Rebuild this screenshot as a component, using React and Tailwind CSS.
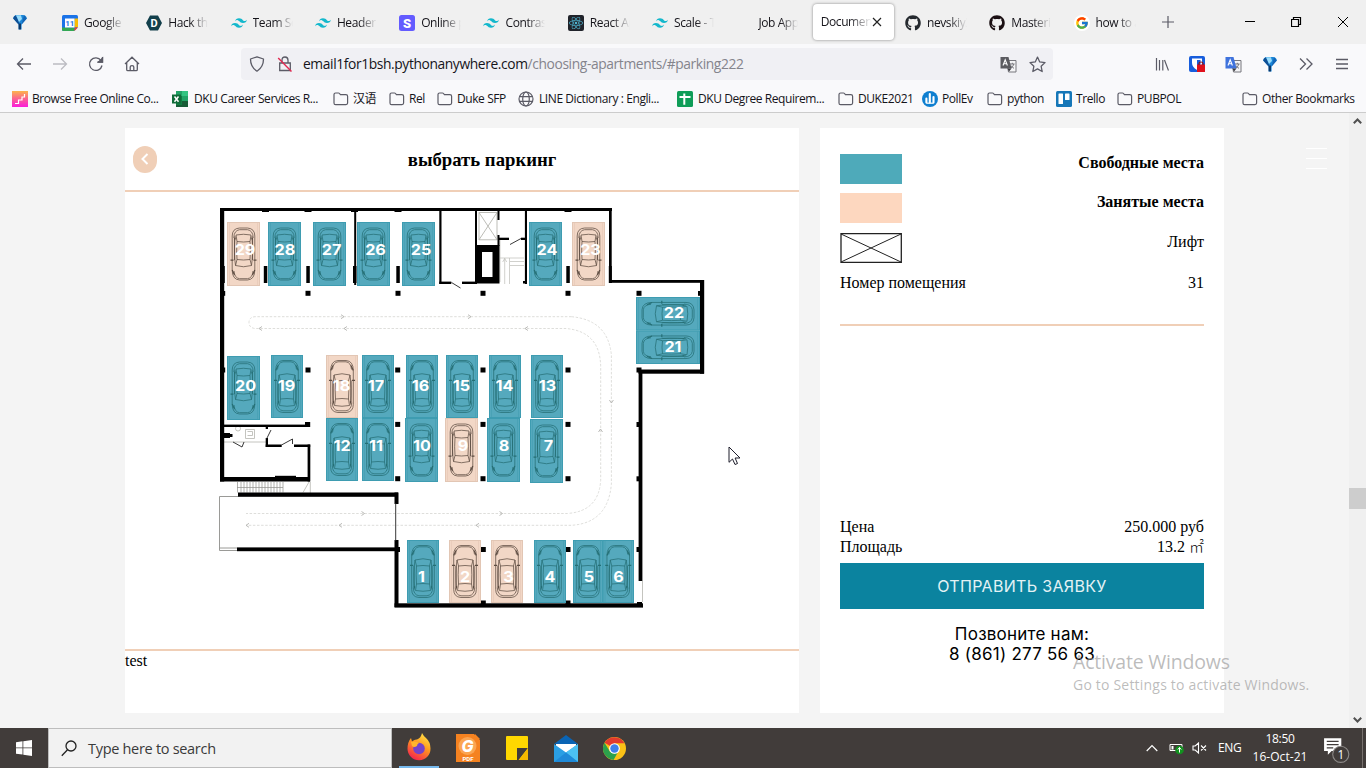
import React from "react";
import { FaGithub, FaReact } from "react-icons/fa";
import { SiTailwindcss } from "react-icons/si";
import { FcGoogle } from "react-icons/fc";

const FREE = "#55a9bd";
const TAKEN = "#f2d7c6";

/* ---------- small icons ---------- */

const Gem = () => (
  <svg width="16" height="16" viewBox="0 0 16 16">
    <path d="M1.200 4.600Q1.500 1.200 5 1h6q3.500.2 3.800 3.600L9.600 10.500V15.400H6.600V10.500z" fill="#1b86d8" />
    <path d="M1.200 4.600Q1.500 2 4 1.300L7 8.500 6.600 10.500z" fill="#0f4f94" />
    <path d="M4 1.200h5L10 5 7 8z" fill="#9addfb" />
    <path d="M12 1.200l2.800 3.400L9.600 10.500z" fill="#1565b5" />
    <path d="M6.600 9.500h2.400v5.900H6.600z" fill="#0b3768" />
  </svg>
);

const Calendar = () => (
  <svg width="16" height="16" viewBox="0 0 16 16">
    <path d="M0 1.500Q0 0 1.500 0h13Q16 0 16 1.500V12l-4 4H1.500Q0 16 0 14.500z" fill="#1a73e8" />
    <path d="M12.500 3.500H16V12l-3.500.5z" fill="#fbbc04" />
    <path d="M0 12.500h12.500V16h-11Q0 16 0 14.500z" fill="#34a853" />
    <path d="M12.500 12.500H16L12.500 16z" fill="#ea4335" />
    <path d="M3 3.500h9.500v9H3z" fill="#fff" />
    <text x="7.800" y="11" fontSize="8" fontWeight="700" fontFamily="Roboto, sans-serif" textAnchor="middle" fill="#1a73e8">11</text>
  </svg>
);

const HexD = () => (
  <svg width="16" height="16" viewBox="0 0 16 16">
    <path d="M4 .5h8L16 8l-4 7.500H4L0 8z" fill="#123f4b" />
    <text x="8.200" y="12" fontSize="11" fontWeight="700" fontFamily="Roboto, sans-serif" textAnchor="middle" fill="#fff">D</text>
  </svg>
);

const StackS = () => (
  <svg width="16" height="16" viewBox="0 0 16 16">
    <rect width="16" height="16" rx="2.500" fill="#635bff" />
    <text x="8" y="12.700" fontSize="13" fontWeight="900" fontFamily="Roboto, sans-serif" textAnchor="middle" fill="#fff">S</text>
  </svg>
);

const Wave = () => <SiTailwindcss size={16} color="#14b8cc" />;

const ReactTile = () => (
  <span className="flex size-4 items-center justify-center rounded-xs bg-[#20232a]">
    <FaReact size={14} color="#4fb3cf" />
  </span>
);

const GoogleRound = () => (
  <span className="flex size-4 items-center justify-center rounded-full bg-white">
    <FcGoogle size={14} />
  </span>
);

const Folder = () => (
  <svg width="16" height="16" viewBox="0 0 16 16" fill="none" stroke="#5b5b66" strokeWidth="1.200">
    <path d="M1 3.600Q1 2 2.600 2h2.900q.6 0 1 .5L7.400 3.600h5.500q1.700 0 1.700 1.600v6.900q0 1.500-1.600 1.500H2.600Q1 13.600 1 12z" />
  </svg>
);

const Stairs = () => (
  <svg width="16" height="16" viewBox="0 0 16 16">
    <defs>
      <linearGradient id="st" x1="0" y1="0" x2="0" y2="1">
        <stop offset="0" stopColor="#fdb44b" />
        <stop offset=".5" stopColor="#fb5f93" />
        <stop offset="1" stopColor="#fb1ddc" />
      </linearGradient>
    </defs>
    <rect width="16" height="16" fill="url(#st)" />
    <path d="M3 12.500h3.500V9H10V6h2.500V3" stroke="#fff" strokeWidth="1.200" fill="none" />
  </svg>
);

const Excel = () => (
  <svg width="16" height="16" viewBox="0 0 16 16">
    <path d="M4 0h12v16H4z" fill="#21a366" />
    <path d="M10 0h6v5h-6z" fill="#33c481" />
    <path d="M4 5h6v11H4z" fill="#107c41" />
    <path d="M10 10h6v6H4v-2h6z" fill="#185c37" />
    <path d="M0 3.500h9v9H0z" fill="#0f6b38" />
    <path d="M2.500 5.500 6.500 10.700M6.500 5.500 2.500 10.700" stroke="#fff" strokeWidth="1.500" />
  </svg>
);

const Globe = () => (
  <svg width="16" height="16" viewBox="0 0 16 16" fill="none" stroke="#5b5b66" strokeWidth="1.200">
    <circle cx="8" cy="8" r="7" />
    <ellipse cx="8" cy="8" rx="3.300" ry="7" />
    <path d="M1.500 5.700h13M1.500 10.300h13" />
  </svg>
);

const Sheet = () => (
  <svg width="16" height="16" viewBox="0 0 16 16">
    <rect width="16" height="16" rx="1.500" fill="#0f9d58" />
    <path d="M7.300 2.500v11.300M2.500 6h11" stroke="#fff" strokeWidth="2" />
  </svg>
);

const Poll = () => (
  <svg width="16" height="16" viewBox="0 0 16 16">
    <circle cx="8" cy="8" r="8" fill="#0f7fd0" />
    <path d="M4.400 7.500v4M7.800 3v8.500M11.500 6v5.500" stroke="#fff" strokeWidth="2.100" strokeLinecap="round" />
    <path d="M4.400 12.200h7.100" stroke="#fff" strokeWidth="1.200" />
  </svg>
);

const Trello = () => (
  <svg width="16" height="16" viewBox="0 0 16 16">
    <rect width="16" height="16" rx="1.500" fill="#1677b8" />
    <rect x="2.500" y="2.500" width="4.500" height="10.500" rx=".6" fill="#fff" />
    <rect x="9" y="2.500" width="4.500" height="6.500" rx=".6" fill="#fff" />
  </svg>
);

const Translate = ({ color = "#3f73dd" }) => (
  <svg width="17" height="17" viewBox="0 0 17 17">
    <path d="M6.500 4.500h9.500v11.500H8.500z" fill="#f4f4f6" stroke="#77777d" />
    <path d="M10 8h4.600M12.300 6.800V8M13.800 8q-.6 2.700-3 4M11 9.500q1 2 3 2.800" stroke="#77777d" fill="none" />
    <path d="M.5 1h8l3 11.500H.5z" fill={color} />
    <path d="M7.500 12.500h4l-2.500 3z" fill="#3a3a3f" />
    <path d="M3 9.500 5.200 3.800 7.400 9.500M3.700 7.800h3" stroke="#fff" strokeWidth="1.100" fill="none" />
  </svg>
);

/* ---------- browser chrome ---------- */

const tabs = [
  { icon: <Calendar />, label: "Google" },
  { icon: <HexD />, label: "Hack th" },
  { icon: <Wave />, label: "Team Se" },
  { icon: <Wave />, label: "Header S" },
  { icon: <StackS />, label: "Online p" },
  { icon: <Wave />, label: "Contras" },
  { icon: <ReactTile />, label: "React Ap" },
  { icon: <Wave />, label: "Scale - T" },
  { icon: null, label: "Job App" },
  { active: true, label: "Documen" },
  { icon: <FaGithub size={16} color="#24292e" />, label: "nevskiy3" },
  { icon: <FaGithub size={16} color="#1b1013" />, label: "Masterin" },
  { icon: <GoogleRound />, label: "how to a" },
];

const Fade = ({ children }) => (
  <span className="block w-10 overflow-hidden whitespace-nowrap tracking-[-0.4px] [mask-image:linear-gradient(to_right,black_55%,transparent)]">
    {children}
  </span>
);

const FadeWide = ({ children }) => (
  <span className="block w-[51px] overflow-hidden whitespace-nowrap tracking-[-0.4px] [mask-image:linear-gradient(to_right,black_55%,transparent)]">
    {children}
  </span>
);

const TabStrip = () => (
  <div className="flex h-11 bg-[#f0f0f0] font-['Open_Sans',sans-serif] text-[12px] text-[#15141a]">
    <div className="flex w-[52px] shrink-0 items-center pl-3"><Gem /></div>
    {tabs.map((t, i) =>
      t.active ? (
        <div key={i} className="flex w-[84.300px] shrink-0 items-center py-1 pr-[1px] pl-[2px]">
          <div className="flex h-[36px] flex-1 items-center rounded-sm bg-white pl-[8px] shadow-[0_0_3px_rgba(0,0,0,0.45)]">
            <FadeWide>{t.label}</FadeWide>
            <svg className="shrink-0" width="10" height="10" viewBox="0 0 10 10" stroke="#222" strokeWidth="1.200"><path d="M1 1l8 8M9 1 1 9" /></svg>
          </div>
        </div>
      ) : (
        <div key={i} className="flex w-[84.300px] shrink-0 items-center gap-[6px] pt-[1px] pl-[10px]">
          <span className="flex size-4 shrink-0 items-center justify-center">{t.icon}</span>
          <Fade>{t.label}</Fade>
        </div>
      )
    )}
    <div className="flex flex-1 items-center pl-[14px]">
      <svg width="12" height="12" viewBox="0 0 12 12" stroke="#5b5b66" strokeWidth="1.200"><path d="M6 0v12M0 6h12" /></svg>
    </div>
    <div className="flex shrink-0 items-center gap-[35px] pr-[17px]">
      <svg width="12" height="12" viewBox="0 0 12 12" stroke="#000"><path d="M1 5.500h10" /></svg>
      <svg width="11" height="12" viewBox="0 0 11 12" stroke="#000" fill="none"><path d="M.5 3.500h7v7h-7zM2.500 3.500v-2h7v7h-2" strokeWidth="1.200" /></svg>
      <svg width="12" height="12" viewBox="0 0 12 12" stroke="#000"><path d="M1 1l10 10M11 1 1 11" /></svg>
    </div>
  </div>
);

const NavBar = () => (
  <div className="flex h-10 items-center bg-[#f9f9fb]">
    <div className="flex w-[241px] items-center gap-5 pl-4 text-[#5b5b66]">
      <svg width="16" height="16" viewBox="0 0 16 16" stroke="currentColor" strokeWidth="1.300" fill="none"><path d="M15 8H1.500M7 2.500 1.500 8 7 13.500" /></svg>
      <svg width="16" height="16" viewBox="0 0 16 16" stroke="#bcbcc2" strokeWidth="1.300" fill="none"><path d="M1 8h13.500M9 2.500 14.500 8 9 13.500" /></svg>
      <svg width="16" height="16" viewBox="0 0 16 16" stroke="currentColor" strokeWidth="1.300" fill="none"><path d="M14 9.500A6.300 6.300 0 1 1 13 4.500M14.500 1v5h-5" /><path d="M14.500 2v4h-4z" fill="currentColor" /></svg>
      <svg width="16" height="16" viewBox="0 0 16 16" stroke="currentColor" strokeWidth="1.300" fill="none"><path d="M1 8 8 1.200 15 8M2.700 6.800v6.700q0 1.200 1.200 1.200h8.200q1.200 0 1.200-1.200V6.800M6.200 14.500V11q0-1.300 1.800-1.300T9.800 11v3.500" /></svg>
    </div>
    <div className="flex h-8 w-[812px] items-center rounded-sm bg-[#f0f0f4] pl-2">
      <svg width="16" height="16" viewBox="0 0 16 16" stroke="#5b5b66" strokeWidth="1.300" fill="none"><path d="M8 .8 14.500 3q0 8-6.500 12.200Q1.500 11 1.500 3z" strokeLinejoin="round" /></svg>
      <svg className="ml-3" width="16" height="16" viewBox="0 0 16 16" stroke="#5b5b66" strokeWidth="1.300" fill="none">
        <path d="M5 7V4.200Q5 1 8 1t3 3.200V7M2.700 7h10.600v7.500H2.700z" />
        <path d="M1.200 2 14.500 15.500" stroke="#e22850" strokeWidth="1.400" />
      </svg>
      <span className="ml-[10px] whitespace-nowrap font-['Open_Sans',sans-serif] text-[13.800px] tracking-[-0.380px] text-[#15141a]">
        email1for1bsh.pythonanywhere.com<span className="text-[#84848c]">/choosing-apartments/#parking222</span>
      </span>
      <span className="flex-1" />
      <Translate color="#5b5b60" />
      <svg className="mr-[7px] ml-3" width="17" height="17" viewBox="0 0 16 16" stroke="#5b5b66" strokeWidth="1.200" fill="none"><path d="m8 1 2.100 4.600 5 .6-3.700 3.400 1 5L8 12.100l-4.400 2.500 1-5L.900 6.200l5-.6z" strokeLinejoin="round" /></svg>
    </div>
    <div className="flex flex-1 items-center justify-end gap-5 pr-4">
      <svg width="16" height="16" viewBox="0 0 16 16" stroke="#5b5b66" strokeWidth="1.200"><path d="M3.500 2v12.500M6.500 4v10.500M9.800 4v10.500M11.500 4l4 10.500" /></svg>
      <svg width="16" height="16" viewBox="0 0 16 16">
        <rect width="16" height="16" rx="2" fill="#175ddc" />
        <path d="M3 2.500h10V7q0 4-5 7-5-3-5-7z" fill="#fff" /><path d="M8 4h3.500v4Q11 11 8 12.500z" fill="#175ddc" />
        <rect x="8" y="8.500" width="8" height="7.500" fill="#e0101c" /><path d="M10 9V7.500Q10 6 12 6t2 1.500V9" stroke="#8d1218" strokeWidth="1.200" fill="none" />
      </svg>
      <Translate />
      <Gem />
      <svg width="16" height="16" viewBox="0 0 16 16" stroke="#5b5b66" strokeWidth="1.300" fill="none"><path d="m2 2.500 5.500 5.500L2 13.500M8.500 2.500 14 8l-5.500 5.500" /></svg>
      <svg width="16" height="16" viewBox="0 0 16 16" stroke="#5b5b66" strokeWidth="1.300"><path d="M2 3.500h12M2 8h12M2 12.500h12" /></svg>
    </div>
  </div>
);

const Bookmark = ({ icon, label, box }) => (
  <div className={"flex shrink-0 items-center gap-1 whitespace-nowrap " + box}>
    {icon}
    <span>{label}</span>
  </div>
);

const Bookmarks = () => (
  <div className="flex h-[29px] items-center border-b border-[#cccccc] bg-[#f9f9fb] pt-[1px] pl-3 font-['Open_Sans','Noto_Sans_CJK_SC',sans-serif] text-[12px] tracking-[-0.420px] text-[#15141a]">
    <Bookmark box="w-[160px]" icon={<Stairs />} label="Browse Free Online Co..." />
    <Bookmark box="w-[161px] gap-[6px]" icon={<Excel />} label="DKU Career Services R..." />
    <Bookmark box="w-[56px]" icon={<Folder />} label="汉语" />
    <Bookmark box="w-[48px]" icon={<Folder />} label="Rel" />
    <Bookmark box="w-[81px]" icon={<Folder />} label="Duke SFP" />
    <Bookmark box="w-[159px] gap-[5px]" icon={<Globe />} label="LINE Dictionary : Engli..." />
    <Bookmark box="w-[161px] gap-[5px]" icon={<Sheet />} label="DKU Degree Requirem..." />
    <Bookmark box="w-[84px]" icon={<Folder />} label="DUKE2021" />
    <Bookmark box="w-[65px]" icon={<Poll />} label="PollEv" />
    <Bookmark box="w-[69px]" icon={<Folder />} label="python" />
    <Bookmark box="w-[61px]" icon={<Trello />} label="Trello" />
    <Bookmark box="w-[68px]" icon={<Folder />} label="PUBPOL" />
    <span className="flex-1" />
    <Bookmark box="w-[124px]" icon={<Folder />} label="Other Bookmarks" />
  </div>
);

/* ---------- parking plan ---------- */

/* n, x, y, w, h, label x, label y, direction, taken */
const spaces = [
  [29, 227, 222, 33, 64, 245, 250, "down", 1],
  [28, 268, 222, 33, 64, 285, 250, "down", 0],
  [27, 313, 222, 33, 64, 331.5, 250, "down", 0],
  [26, 357, 222, 33, 64, 375.5, 250, "down", 0],
  [25, 402, 222, 33, 64, 421, 250, "down", 0],
  [24, 529, 222, 33, 64, 547, 250, "down", 0],
  [23, 572, 222, 33, 64, 590.5, 250, "down", 1],
  [22, 636, 297, 64, 33.5, 674, 313, "left", 0],
  [21, 636, 330.5, 64, 33.5, 673, 347, "left", 0],
  [20, 227, 356, 33, 64, 245.5, 386, "down", 0],
  [19, 271, 355, 32, 63, 286.5, 386, "up", 0],
  [18, 326, 355, 32, 63, 341.5, 386, "up", 1],
  [17, 362, 355, 32, 63, 376, 386, "up", 0],
  [16, 406, 355, 32, 63, 420.5, 386, "up", 0],
  [15, 446, 355, 32, 63, 461.5, 386, "up", 0],
  [14, 489, 355, 32, 63, 504.5, 386, "up", 0],
  [13, 531, 355, 32, 63, 547.5, 386, "up", 0],
  [12, 326, 418, 32, 63, 342, 445.5, "up", 0],
  [11, 362, 418, 32, 63, 376, 445.5, "up", 0],
  [10, 405, 418, 33, 64, 422, 445.5, "down", 0],
  [9, 445, 418, 33, 64, 463, 445.5, "down", 1],
  [8, 487, 418, 33, 64, 504, 445.5, "down", 0],
  [7, 530, 419, 33, 64, 548.5, 445.5, "down", 0],
  [1, 407, 540, 32, 63, 421.5, 576.5, "up", 0],
  [2, 449, 540, 32, 63, 465, 576.5, "up", 1],
  [3, 491, 540, 32, 63, 508.5, 576.5, "up", 1],
  [4, 534, 540, 32, 63, 550, 576.5, "up", 0],
  [5, 573, 540, 30, 63, 589, 576.5, "up", 0],
  [6, 602.5, 540, 31.5, 63, 618.5, 576.5, "up", 0],
];

const turn = { up: 0, down: 180, left: -90 };

/* car seen from above, nose up, centred on the origin */
const Car = ({ stroke }) => (
  <g fill="none" stroke={stroke} strokeWidth=".75">
    <path d="M-11.300-16Q-11.300-25.500-4-26H4Q11.300-25.500 11.300-16V18Q11.300 25.500 4 26H-4Q-11.300 25.500-11.300 18z" />
    <path d="M-9.500-17Q-9-24-4-24.700H4Q9-24 9.500-17M-9.700 16Q-9.500 23.500-4 24.300H4Q9.500 23.500 9.700 16" />
    <path d="M-8-11.500Q0-14 8-11.500L6.500-5.500Q0-6.500-6.500-5.500z" />
    <path d="M-6.500 12.500Q0 11.500 6.500 12.500L7.500 19Q0 20.500-7.500 19z" />
    <path d="M-8-11.500Q-9.800 0-8.500 18M8-11.500Q9.800 0 8.500 18M-6.500-5.500Q-7.200 3-6.500 12.500M6.500-5.500Q7.200 3 6.500 12.500" />
    <path d="M-9-6V16M9-6V16" strokeWidth="1.100" opacity=".8" />
    <path d="M-13-6.200h3M13-6.200h-3M-11.300-16-9-21M11.300-16 9-21M-8.500 14.500v2M8.500 14.500v2" strokeWidth="1.200" />
  </g>
);

const Space = ({ s }) => {
  const [n, x, y, w, h, lx, ly, dir, taken] = s;
  return (
    <g>
      <rect x={x} y={y} width={w} height={h} fill={taken ? TAKEN : FREE} />
      <rect x={x + 0.5} y={y + 0.5} width={w - 1} height={h - 1} fill="none" stroke={taken ? "#dcbfad" : "#3597ad"} opacity=".7" />
      <path d={`M${x + w - 2.5} ${y + 1}v${h - 2}M${x + 2.5} ${y + 1}v${h - 2}`} stroke={taken ? "#e6c9b7" : "#469fb3"} strokeWidth=".7" />
      <g transform={`translate(${x + w / 2} ${y + h / 2}) rotate(${turn[dir]})`}>
        <Car stroke={taken ? "#5d4c42" : "#256f75"} />
      </g>
      <text transform={`translate(${lx} ${ly + 5.3}) scale(1.080 1)`} textAnchor="middle" fontFamily="Inter, sans-serif" fontWeight="700" fontSize="15" fill="#fff">{n}</text>
    </g>
  );
};

const columns = [
  [308, 293.3], [398, 293.3], [483, 293.3], [568, 293.3], [639, 293.3],
  [308, 370], [397.7, 370], [483, 370], [568, 370], [639, 370],
  [397.7, 424.4], [483, 424.4], [568, 424.4],
  [397.7, 478.7], [483, 478.7], [568, 478.7],
  [483.3, 549.5], [568, 549.5], [483.3, 603], [568, 603], [397.5, 549.5],
];

const walls = [
  [220, 208, 4.2, 273.5], [220, 208, 392, 3], [609, 208, 2.7, 75], [609, 280, 95, 2.8],
  [700, 280, 4.2, 93.7], [638.5, 369.5, 65.5, 4.2], [638.6, 370, 3.8, 211],
  [394.5, 603.3, 248.5, 4.3], [394.5, 540, 4, 67], [637, 602, 5, 5],
  [238, 492.5, 160, 4.3], [394.5, 492.5, 4, 11.5], [237, 547.4, 163, 3.8],
  [224, 424.6, 86, 2.4], [305, 422, 5.2, 5], [265.7, 427, 2.3, 2], [265.7, 438, 2.3, 9], [265.7, 444.5, 16, 2.5],
  [294, 444.5, 16.2, 2.5], [307.6, 444.5, 2.7, 37], [220, 477, 90, 4.5], [275, 475.8, 21, 2],
  [354.2, 208, 2, 77], [353, 266, 3.5, 17], [439.3, 208, 2.2, 76], [439.3, 281.6, 12, 2.4],
  [462, 281.6, 15, 2.4], [475, 208, 2, 40], [475, 245, 24.5, 38.5], [497.5, 208, 2, 12], [497.5, 235, 2, 11],
  [499, 237.7, 10, 2.3], [521, 237.7, 5, 2.3], [524.9, 208, 2.1, 76], [523, 281, 2, 2.5],
  [263.8, 266, 3.5, 17], [306.3, 266, 3.5, 17], [396.3, 266, 3.5, 17], [566.3, 266, 3.5, 17],
  [222, 266, 2.8, 17], [608.8, 266, 3, 17],
  [262, 210, 7, 2], [304.5, 210, 7, 2], [351, 210, 7, 2], [394.5, 210, 7, 2], [564.5, 210, 7, 2],
  [222, 291, 3.2, 4.8], [222, 367.5, 3.2, 5], [698, 291, 3, 4.8], [636.5, 422, 3, 5], [636.5, 476.3, 3, 5], [636.5, 547, 3, 5],
  [222, 433, 8, 5], [229, 434, 3.5, 3],
];

const Plan = () => (
  <svg className="block" width="674" height="457" viewBox="125 192 674 457">
    <g stroke="#bdbdb8" fill="none" strokeWidth=".9">
      <path d="M238 496.500H219.500V550.500H237M219.500 548H237" stroke="#8f8f8b" />
      <path d="M642.500 581V602" />
      <path d="M479 212.500h18V239.800h-18zM479 212.500l18 27.300M497 212.500l-18 27.300" stroke="#b5b5af" />
      <path d="M500 258h13M504.700 258v26M509.500 258v26M510 261.500h14M510 265.500h14M500 240v42M513 258h11M502.700 262l2-3.500 2 3.500" strokeWidth=".7" />
      <path d="M245.500 429.500h9v9h-9zM247.500 431.500h5v4h-5M224 442h42" />
      <circle cx="238" cy="428.500" r="2.500" />
      <path d="M237.500 482v10.500M241 482v10.500M244 482v10.500M247 482v10.500M250 482v10.500M253 482v10.500M256 482v10.500M259 482v10.500M262 482v10.500M265 482v10.500M268 482v10.500M271 482v10.500M274 482v10.500M277 482v10.500M280 482v10.500M283 482v10.500M237 487.500h46" stroke="#8f8f8b" strokeWidth=".7" />
      <path d="M310.300 482v11M303 492.500l6-10.500" />
    </g>
    <g fill="none" stroke="#dadad7" strokeWidth=".9" strokeDasharray="2.500 1.600">
      <path d="M571.500 316.700H255Q249 317.200 249 322.500T255 328.500H566Q600.700 331.500 600.700 368V480Q599 511.500 567 513.500H246" />
      <path d="M571.500 316.700Q608 320 611.400 355V484Q608 523 571.500 525.300H246" />
    </g>
    <g fill="none" stroke="#b4b4b1" strokeWidth=".9">
      <path d="M341 314.700l3 2-3 2M468 314.700l3 2-3 2M262 326.500l-3 2 3 2M347 326.500l-3 2 3 2M528 326.500l-3 2 3 2" />
      <path d="M609.400 400l2 3 2-3M598.500 432l2-3 2 3" />
      <path d="M361.500 511.500l3 2-3 2M499.500 511.500l3 2-3 2M249 523.300l-3 2 3 2M342 523.300l-3 2 3 2M479 523.300l-3 2 3 2" />
    </g>
    <g fill="#000">
      {walls.map(([x, y, w, h], i) => <rect key={i} x={x} y={y} width={w} height={h} />)}
      {columns.map(([x, y], i) => <rect key={i} x={x - 2.5} y={y - 2.5} width="5" height="5" />)}
    </g>
    <rect x="482" y="252" width="10.500" height="25" fill="#fff" />
    <g stroke="#222" strokeWidth=".9">
      <path d="M451.500 282.500 460.500 288M510 244.500 521 238.500M233 442l9 5 2-5M271 430l-4.500 9M281.500 445l11-6v5M395.700 503V541" fill="none" />
    </g>
    {spaces.map((s) => <Space key={s[0]} s={s} />)}
  </svg>
);

/* ---------- page ---------- */

const MainPanel = () => (
  <section className="flex h-[585px] w-[674px] flex-col bg-white">
    <header className="flex h-16 items-center border-b-2 border-[#f0cfb7] pl-2">
      <span className="flex h-[27px] w-6 items-center justify-center rounded-full bg-[#f0cfb7]">
        <svg width="8" height="12" viewBox="0 0 8 12" fill="none" stroke="#fff" strokeWidth="2"><path d="M6.500 1 1.500 6l5 5" /></svg>
      </span>
      <h3 className="flex-1 pt-[2px] pl-2 text-center text-[18.720px] font-bold">выбрать паркинг</h3>
    </header>
    <Plan />
    <div className="h-0.5 bg-[#f0cfb7]" />
    <p className="text-[16px] leading-[19px]">test</p>
  </section>
);

const SidePanel = () => (
  <aside className="ml-[21px] flex h-[585px] w-[404px] flex-col bg-white px-5 pt-[26px]">
    <div className="flex h-[39px] justify-between">
      <span className="h-[30px] w-[62px] bg-[#4eaaba]" />
      <b className="leading-[18px]">Свободные места</b>
    </div>
    <div className="flex h-10 justify-between">
      <span className="h-[30px] w-[62px] bg-[#fdd7bf]" />
      <b className="leading-[18px]">Занятые места</b>
    </div>
    <div className="flex h-[41px] justify-between">
      <svg width="62" height="30" viewBox="0 0 62 30" fill="none" stroke="#222"><path d="M1 .7h60.300v28.800H1z" strokeWidth="1.300" /><path d="M1 1l60 28M61 1 1 29" /></svg>
      <span className="leading-[18px]">Лифт</span>
    </div>
    <div className="flex h-[50px] justify-between leading-[18px]">
      <span>Номер помещения</span>
      <span>31</span>
    </div>
    <div className="h-0.5 shrink-0 bg-[#f0cfb7]" />
    <span className="flex-1" />
    <div className="flex justify-between leading-5"><span>Цена</span><span>250.000 руб</span></div>
    <div className="flex h-[26px] justify-between leading-5"><span>Площадь</span><span>13.2 <span className="font-['Noto_Sans_CJK_SC'] text-[15px] leading-none font-light">㎡</span></span></div>
    <button className="h-[46px] shrink-0 bg-[#0b839f] font-['Inter',sans-serif] text-[16px] tracking-[0.320px] text-[#e3f2f5]">ОТПРАВИТЬ ЗАЯВКУ</button>
    <div className="h-[104px] shrink-0 pt-[15px] text-center font-['Inter',sans-serif] text-[17px] leading-5 tracking-[0.230px]">
      <p>Позвоните нам:</p>
      <p>8 (861) 277 56 63</p>
    </div>
  </aside>
);

const Page = () => (
  <main className="flex h-[615px] bg-[#f4f4f4] font-['Liberation_Serif',serif] text-[16px] text-black">
    <div className="flex flex-1 pt-[15px] pl-[125px]">
      <MainPanel />
      <SidePanel />
      <div className="ml-[82px] flex h-fit flex-col gap-[9px] pt-5">
        <span className="h-px w-[21px] bg-white" />
        <span className="h-px w-[21px] bg-white" />
        <span className="h-px w-[21px] bg-white" />
      </div>
    </div>
    <div className="flex w-[17px] flex-col items-center bg-[#f0f0f0] py-[5px]">
      <svg width="9" height="6" viewBox="0 0 9 6" fill="none" stroke="#505050" strokeWidth="2"><path d="M.8 5.200 4.500 1.500l3.700 3.700" /></svg>
      <span className="h-[364px]" />
      <span className="h-[21px] w-[17px] bg-[#cdcdcd]" />
      <span className="flex-1" />
      <svg width="9" height="6" viewBox="0 0 9 6" fill="none" stroke="#505050" strokeWidth="2"><path d="M.8.800l3.700 3.700L8.200.800" /></svg>
    </div>
  </main>
);

/* ---------- taskbar ---------- */

const Firefox = () => (
  <svg width="24" height="28" viewBox="0 0 24 28">
    <defs>
      <linearGradient id="fx" x1=".8" y1="0" x2=".3" y2="1"><stop offset="0" stopColor="#ffe74a" /><stop offset=".45" stopColor="#ff9a1f" /><stop offset="1" stopColor="#f5214f" /></linearGradient>
    </defs>
    <path d="M15 0q1.500 3 4 5 4.500 4 4.500 10.500A11.500 11.500 0 0 1 .5 16Q.5 9 4 5l1 3.500Q8 6 10 6.500 14 5 15 0z" fill="url(#fx)" />
    <circle cx="12" cy="15.500" r="5.800" fill="#7542c9" />
    <path d="M4 9q4-1.500 8 1-2 1-2 3-3 2-5 0z" fill="#ffb52b" />
  </svg>
);

const Foxit = () => (
  <svg width="24" height="28" viewBox="0 0 24 28">
    <path d="M0 0h18l6 6v22H0z" fill="#f58220" />
    <path d="M19 0l5 5h-5z" fill="#f58220" />
    <circle cx="11.500" cy="12" r="9" fill="#fba552" />
    <text x="11.500" y="18" textAnchor="middle" fontFamily="Inter, sans-serif" fontStyle="italic" fontWeight="800" fontSize="16" fill="#fff">G</text>
    <text x="12" y="26.500" textAnchor="middle" fontFamily="Roboto, sans-serif" fontWeight="700" fontSize="6" fill="#fff">PDF</text>
  </svg>
);

const Chrome = () => (
  <svg width="23" height="23" viewBox="0 0 24 24">
    <circle cx="12" cy="12" r="12" fill="#fbc116" />
    <path d="M12 12 1.600 6A12 12 0 0 1 22.400 6.500H12z" fill="#e33b2e" />
    <path d="M1.600 6 7.200 15 12 17.500 15.500 16 11 24A12 12 0 0 1 1.600 6z" fill="#2ca14c" />
    <circle cx="12" cy="12" r="5.600" fill="#fff" />
    <circle cx="12" cy="12" r="4.400" fill="#3f80ea" />
  </svg>
);

const Taskbar = () => (
  <footer className="flex h-10 bg-[#413c3a] font-['Open_Sans',sans-serif] text-white">
    <div className="flex w-12 items-center justify-center">
      <svg width="16" height="16" viewBox="0 0 16 16" fill="#fff"><path d="M0 2.200 6.500 1.300v6.200H0zM7.300 1.200 16 0v7.500H7.300zM0 8.300h6.500v6.300L0 13.700zM7.300 8.300H16V16l-8.700-1.200z" /></svg>
    </div>
    <div className="flex w-[344px] items-center border border-[#bdbdbd] bg-[#f2f2f2] pl-3 text-[14.500px] tracking-[-0.3px] text-[#3a3a3a]">
      <svg width="16" height="17" viewBox="0 0 16 17" stroke="#222" strokeWidth="1.300" fill="none"><circle cx="10" cy="6" r="5" /><path d="M6.500 9.800.8 15.800" /></svg>
      <span className="ml-[11px] pt-px">Type here to search</span>
    </div>
    <div className="ml-[2px] flex">
      <div className="flex w-[49px] items-center justify-center"><div className="flex h-10 w-10 items-center justify-center border-b-2 border-[#76b9ed]"><Firefox /></div></div>
      <div className="flex w-[49px] items-center justify-center"><Foxit /></div>
      <div className="flex w-[49px] items-center justify-center">
        <svg width="22" height="26" viewBox="0 0 22 26"><rect y="1" width="22" height="24" rx="1" fill="#ffd800" /><path d="M11 13h11l-9.500 12H11z" fill="#413c3a" /><path d="M22 13v12h-9z" fill="#f5b800" /></svg>
      </div>
      <div className="flex w-[49px] items-center justify-center">
        <svg width="24" height="27" viewBox="0 0 24 27"><path d="M0 9 12 0l12 9z" fill="#0a64b4" /><path d="M2 9h20v9H2z" fill="#fff" /><path d="M0 9l12 8.500L24 9v18H0z" fill="#2a9fe4" /><path d="M12 17.500 24 9v18z" fill="#4bc1f2" /><path d="M0 27l12-9.500L24 27z" fill="#1f8ad8" /></svg>
      </div>
      <div className="flex w-[49px] items-center justify-center"><Chrome /></div>
    </div>
    <span className="flex-1" />
    <div className="flex items-center text-[12px] tracking-[-0.3px]">
      <svg width="12" height="8" viewBox="0 0 12 8" fill="none" stroke="#fff" strokeWidth="1.200"><path d="M.7 7 6 1.500 11.300 7" /></svg>
      <svg className="ml-[11px]" width="15" height="14" viewBox="0 0 15 14"><path d="M1 3.500h12v6H1z" fill="none" stroke="#fff" /><path d="M2.500 5h2v3.500h-2z" fill="#fff" /><circle cx="10.500" cy="9" r="4.300" fill="#12921f" /><path d="M10.500 6.500v5M8.800 8.500l1.700-2 1.700 2" stroke="#fff" fill="none" /></svg>
      <svg className="ml-2" width="16" height="14" viewBox="0 0 16 14" fill="none" stroke="#fff" strokeWidth="1.100"><path d="M1 5v4h2.200L6.500 12V2L3.200 5zM9 4.500l5 5M14 4.500l-5 5" /></svg>
      <span className="ml-[10px] w-6">ENG</span>
      <div className="ml-[6px] flex w-[64px] flex-col items-center leading-[18px]"><span>18:50</span><span className="tracking-[0.050px]">16-Oct-21</span></div>
      <svg className="mt-1 ml-[11px]" width="28" height="28" viewBox="0 0 26 26"><path d="M1 2h16v12h-9l-3.500 3.500V14H1z" fill="#fff" /><path d="M3.500 5h11M3.500 8h11M3.500 11h6" stroke="#413c3a" /><circle cx="16.500" cy="17" r="7.500" fill="#413c3a" stroke="#8d8a88" /><text x="16.500" y="21" textAnchor="middle" fontFamily="Open Sans, sans-serif" fontSize="11" fill="#fff">1</text></svg>
      <span className="ml-[11px] h-10 w-1 border-l border-[#77716e]" />
    </div>
  </footer>
);

export default function App() {
  return (
    <div className="relative h-[768px] w-[1366px] overflow-hidden">
      <TabStrip />
      <NavBar />
      <Bookmarks />
      <Page />
      <Taskbar />
      <div className="pointer-events-none absolute top-[650px] left-[1073px] whitespace-nowrap font-['Open_Sans',sans-serif] text-[#8f8f8f]/60">
        <p className="text-[19.500px] leading-6 tracking-[-0.2px]">Activate Windows</p>
        <p className="mt-px text-[14px] leading-5 tracking-[0.2px]">Go to Settings to activate Windows.</p>
      </div>
      <svg className="absolute top-[446px] left-[728px]" width="13" height="20" viewBox="0 0 13 20"><path d="M1 1v15.300l3.500-3.300 2.500 5.500 2.500-1-2.400-5.500H12z" fill="#fff" stroke="#1d1d2b" /></svg>
    </div>
  );
}
